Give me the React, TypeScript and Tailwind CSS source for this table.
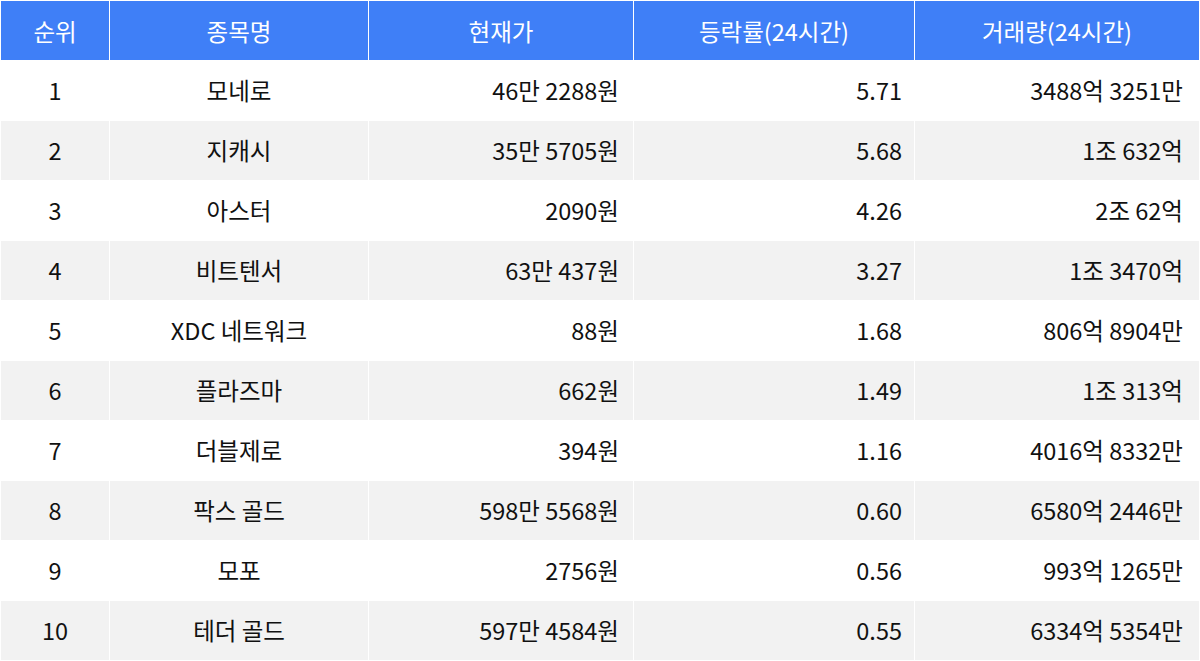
const rows = [
  { rank: 1, name: '모네로', price: '46만 2288원', change: '5.71', volume: '3488억 3251만' },
  { rank: 2, name: '지캐시', price: '35만 5705원', change: '5.68', volume: '1조 632억' },
  { rank: 3, name: '아스터', price: '2090원', change: '4.26', volume: '2조 62억' },
  { rank: 4, name: '비트텐서', price: '63만 437원', change: '3.27', volume: '1조 3470억' },
  { rank: 5, name: 'XDC 네트워크', price: '88원', change: '1.68', volume: '806억 8904만' },
  { rank: 6, name: '플라즈마', price: '662원', change: '1.49', volume: '1조 313억' },
  { rank: 7, name: '더블제로', price: '394원', change: '1.16', volume: '4016억 8332만' },
  { rank: 8, name: '팍스 골드', price: '598만 5568원', change: '0.60', volume: '6580억 2446만' },
  { rank: 9, name: '모포', price: '2756원', change: '0.56', volume: '993억 1265만' },
  { rank: 10, name: '테더 골드', price: '597만 4584원', change: '0.55', volume: '6334억 5354만' },
];

const headers = ['순위', '종목명', '현재가', '등락률(24시간)', '거래량(24시간)'];

export default function App() {
  return (
    <div
      className="grid h-[661px] w-[1200px] grid-cols-[108px_258px_264px_280px_1fr] auto-rows-[59px] gap-px bg-white p-px text-[23.5px] text-[#111]"
      style={{ fontFamily: '"Noto Sans CJK KR", "Noto Sans", sans-serif' }}
    >
      {headers.map(h => (
        <div key={h} className="flex items-center justify-center bg-[#3f7ff7] pt-0.5 text-white">
          {h}
        </div>
      ))}
      {rows.map((r, i) => {
        const bg = i % 2 === 0 ? 'bg-white' : 'bg-[#f2f2f2]';
        return [
          <div key={`${r.rank}-a`} className={`flex items-center justify-center ${bg}`}>{r.rank}</div>,
          <div key={`${r.rank}-b`} className={`flex items-center justify-center ${bg}`}>{r.name}</div>,
          <div key={`${r.rank}-c`} className={`flex items-center justify-end pr-3.5 ${bg}`}>{r.price}</div>,
          <div key={`${r.rank}-d`} className={`flex items-center justify-end pr-3 ${bg}`}>{r.change}</div>,
          <div key={`${r.rank}-e`} className={`flex items-center justify-end pr-4 ${bg}`}>{r.volume}</div>,
        ];
      })}
    </div>
  );
}
